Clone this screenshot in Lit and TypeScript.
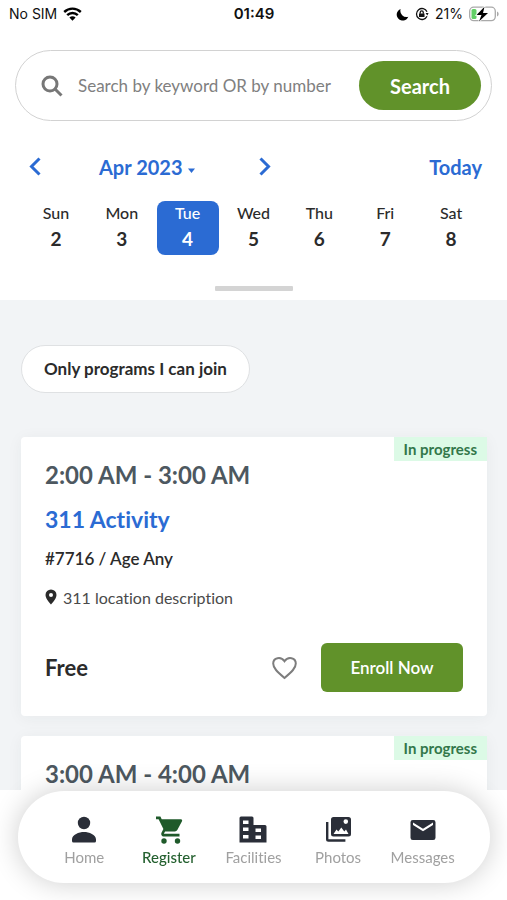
import { LitElement, html, css, svg, nothing } from "lit";
import { customElement, property, state } from "lit/decorators.js";
import { classMap } from "lit/directives/class-map.js";

const navItems = [
  {
    label: "Home",
    icon: svg`<circle cx="14" cy="7" r="6.2"/><path d="M2 26.500v-3C2 18.500 9 16 14 16S26 18.500 26 23.500v1.500a1.500 1.500 0 0 1-1.500 1.500h-21A1.500 1.500 0 0 1 2 25z"/>`,
  },
  {
    label: "Register",
    icon: svg`<path d="M1 .500h4.400l1.300 2.800h19.200c1 0 1.600 1 1.100 1.900l-4.700 8.800c-.5.900-1.400 1.400-2.400 1.400h-9.800l-1.300 2.400h15.700v2.700H8.900c-2.100 0-3.300-2.200-2.300-4l1.800-3.400L3.600 3.200H1z"/><circle cx="9" cy="25" r="2.700"/><circle cx="22.500" cy="25" r="2.700"/>`,
  },
  {
    label: "Facilities",
    icon: svg`<path fill-rule="evenodd" d="M2 .500h11A1.500 1.500 0 0 1 14.500 2v7H26a1.500 1.500 0 0 1 1.500 1.500v16H.5V2A1.500 1.500 0 0 1 2 .500zM4 4.500v3.500h5.500V4.500zM4 11.500V15h5.500v-3.500zM4 19v3.500h5.500V19zM16.500 12.500V16H22v-3.500zM16.500 19.500V23H22v-3.500z"/>`,
  },
  {
    label: "Photos",
    icon: svg`<path fill-rule="evenodd" d="M9.500 1h15A2.500 2.500 0 0 1 27 3.500v14.500a2.500 2.500 0 0 1-2.500 2.500h-15A2.500 2.500 0 0 1 7 18V3.500A2.500 2.500 0 0 1 9.500 1zM9.500 18h15l-2.500-4.500-1.700 2-3-4-3 4-1.800-2zM21.800 3.300a2.300 2.300 0 1 0 0 4.600 2.300 2.300 0 0 0 0-4.600z"/><path d="M2 6h2.400v17.300h17v2.500H4.500A2.500 2.500 0 0 1 2 23.300z"/>`,
  },
  {
    label: "Messages",
    icon: svg`<path fill-rule="evenodd" d="M3.800 4h20.400A2.300 2.300 0 0 1 26.500 6.300v15.400a2.300 2.300 0 0 1-2.300 2.300H3.800a2.300 2.300 0 0 1-2.300-2.300V6.300A2.300 2.300 0 0 1 3.800 4zM4 6.500v2.400l10 6.400 10-6.400V6.500l-10 6.300z"/>`,
  },
];

const days = [
  ["Sun", 2],
  ["Mon", 3],
  ["Tue", 4],
  ["Wed", 5],
  ["Thu", 6],
  ["Fri", 7],
  ["Sat", 8],
] as const;

const reset = css`
  * {
    box-sizing: border-box;
  }
  button {
    font: inherit;
    color: inherit;
    background: none;
    border: 0;
    padding: 0;
    margin: 0;
    cursor: pointer;
  }
  svg {
    display: block;
    flex: none;
  }
`;

@customElement("status-bar")
class StatusBar extends LitElement {
  static styles = [
    reset,
    css`
      :host {
        display: grid;
        grid-template-columns: 1fr auto 1fr;
        align-items: center;
        height: 28px;
        padding: 0 8px 0 9px;
        font: 14px/20px Inter, "Liberation Sans", sans-serif;
        color: #111;
      }
      .group {
        display: flex;
        align-items: center;
        gap: 6px;
      }
      .end {
        justify-content: flex-end;
      }
      .time {
        font-size: 15px;
        font-weight: 600;
      }
    `,
  ];

  render() {
    return html`
      <div class="group">
        <span>No SIM</span>
        <svg width="19" height="14" viewBox="0 0 19 14" fill="none" stroke="#000" stroke-width="2.400">
          <path d="M1.200 5C6 .500 13 .500 17.800 5M4.200 8.200c3-2.900 7.600-2.900 10.600 0" />
          <path d="M6.400 10.500c1.800-1.600 4.400-1.600 6.200 0L9.500 13.700z" fill="#000" stroke="none" />
        </svg>
      </div>
      <div class="time">01:49</div>
      <div class="group end">
        <svg width="13" height="13" viewBox="0 0 13 13">
          <path d="M4.600 1A6 6 0 1 0 12.300 8.800 6.300 6.300 0 0 1 4.600 1z" />
        </svg>
        <svg width="14" height="14" viewBox="0 0 14 14" fill="none" stroke="#111" stroke-width="1.300">
          <path d="M12 9.300A5.500 5.500 0 1 1 12 4.700" />
          <path d="M10.600 6h3l-1.300 2.600zM4 6.500h5.500v3.400H4z" fill="#111" stroke="none" />
          <path d="M5.200 6.700V5.400a1.500 1.500 0 0 1 3.100 0v1.300" />
        </svg>
        <span>21%</span>
        <svg width="30" height="16" viewBox="0 0 30 16">
          <rect x=".700" y="1.200" width="25.600" height="13.400" rx="4" fill="#fff" stroke="#a9a9a9" stroke-width="1.300" />
          <path d="M28 5.500c2.200 1 2.200 4 0 5z" fill="#a9a9a9" />
          <rect x="2.500" y="3" width="5" height="10" rx="1.500" fill="#62cf66" />
          <path d="M15.500 .800 7.500 9h5l-2.500 6.500L19 7h-5z" stroke="#fff" stroke-width="1.500" paint-order="stroke" />
        </svg>
      </div>
    `;
  }
}

@customElement("program-card")
class ProgramCard extends LitElement {
  @property() time = "";
  @property() name = "";
  @property() details = "";
  @property() place = "";
  @property() price = "";

  static styles = [
    reset,
    css`
      :host {
        display: block;
        position: relative;
        padding: 24px;
        background: #fff;
        border-radius: 4px;
        box-shadow: 0 2px 16px rgba(30, 50, 50, 0.05);
      }
      .badge {
        position: absolute;
        top: 0;
        right: 0;
        padding: 0 10px;
        font-size: 15px;
        font-weight: 700;
        line-height: 24px;
        color: #33774a;
        background: #dcfae6;
      }
      .time,
      .name {
        margin: 0;
        font-size: 24px;
        font-weight: 700;
        line-height: 28px;
      }
      .time {
        color: #4d5860;
      }
      .name {
        margin-top: 16px;
        font-size: 23px;
      }
      .name a {
        color: #2b6bd3;
        text-decoration: none;
      }
      .details,
      .place {
        font-size: 16px;
        line-height: 24px;
      }
      .details {
        margin-top: 14px;
        font-size: 17px;
        font-weight: 600;
      }
      .place {
        display: flex;
        align-items: center;
        gap: 6px;
        margin-top: 15px;
        color: #4a4a4a;
      }
      .foot {
        display: flex;
        align-items: center;
        margin-top: 33px;
      }
      .price {
        flex: 1;
        font-size: 22px;
        font-weight: 700;
      }
      .enroll {
        width: 142px;
        height: 49px;
        margin-left: 24px;
        border-radius: 6px;
        background: #61922a;
        color: #fff;
        font-size: 17px;
        font-weight: 600;
      }
    `,
  ];

  render() {
    return html`
      <div class="badge">In progress</div>
      <div class="time">${this.time}</div>
      ${this.name ? this.renderBody() : nothing}
    `;
  }

  private renderBody() {
    return html`
      <h2 class="name"><a href="#">${this.name}</a></h2>
      <div class="details">${this.details}</div>
      <div class="place">
        <svg width="12" height="18" viewBox="0 0 12 18" fill="#2a2a2a">
          <path fill-rule="evenodd" d="M6 .500A5.500 5.500 0 0 0 .5 6C.5 10 6 15.500 6 15.500S11.500 10 11.500 6A5.500 5.500 0 0 0 6 .500zm0 3.500a2 2 0 1 1 0 4 2 2 0 0 1 0-4z" />
        </svg>
        <span>${this.place}</span>
      </div>
      <div class="foot">
        <div class="price">${this.price}</div>
        <button aria-label="Add to favourites">
          <svg width="25" height="24" viewBox="0 0 25 24" fill="none" stroke="#7d7d7d" stroke-width="2">
            <path d="M12.500 22C5 15.500 1.200 12 1.200 7.500 1.200 1.500 9 .2 12.500 5.200 16 .2 23.800 1.500 23.800 7.500c0 4.500-3.800 8-11.300 14.500z" />
          </svg>
        </button>
        <button class="enroll">Enroll Now</button>
      </div>
    `;
  }
}

@customElement("app-root")
class AppRoot extends LitElement {
  @state() selected = 4;

  static styles = [
    reset,
    css`
      :host {
        display: flex;
        flex-direction: column;
        height: 100vh;
        overflow: hidden;
        background: #fff;
        color: #2b2b2b;
        font-family: Lato, "Liberation Sans", sans-serif;
        font-variant-ligatures: none;
      }
      .search {
        display: flex;
        align-items: center;
        height: 71px;
        margin: 22px 15px 0 15px;
        padding: 0 10px 0 25px;
        border: 1px solid #d2d2d2;
        border-radius: 36px;
      }
      .search input {
        flex: 1;
        min-width: 0;
        margin-left: 15px;
        padding: 0;
        border: 0;
        outline: 0;
        background: none;
        font: 17px/24px Lato, "Liberation Sans", sans-serif;
        color: #2b2b2b;
      }
      .search input::placeholder {
        color: #808080;
        opacity: 1;
      }
      .go {
        width: 122px;
        height: 49px;
        border-radius: 25px;
        background: #61922a;
        color: #fff;
        font-size: 20px;
        font-weight: 700;
      }
      .months {
        display: flex;
        align-items: center;
        margin: 33px 25px 0 29px;
        color: #2b6bd3;
        font-size: 20px;
        font-weight: 700;
        line-height: 26px;
      }
      .month {
        display: flex;
        align-items: center;
        gap: 5px;
        margin: 0 64px 0 58px;
      }
      .today {
        margin-left: auto;
      }
      .week {
        display: grid;
        grid-template-columns: repeat(7, 1fr);
        gap: 4px;
        margin: 21px 25px 31px;
      }
      .day {
        display: flex;
        flex-direction: column;
        align-items: center;
        height: 54px;
        border-radius: 8px;
        font-size: 16px;
        line-height: 24px;
        font-weight: 500;
      }
      .date {
        font-size: 19px;
        line-height: 28px;
        font-weight: 700;
      }
      .day.on {
        background: #2b6bd3;
        color: #fff;
      }
      .handle {
        width: 78px;
        height: 5px;
        margin: 0 auto 9px;
        border-radius: 1px;
        background: #d4d4d4;
      }
      main {
        flex: 1;
        min-height: 0;
        overflow-y: auto;
        scrollbar-width: none;
        padding: 45px 20px 24px 21px;
        background: #f2f4f6;
      }
      .chip {
        height: 48px;
        margin-bottom: 44px;
        padding: 0 22px;
        border: 1px solid #dfe1e3;
        border-radius: 24px;
        background: #fff;
        font-size: 17px;
        line-height: 24px;
        font-weight: 700;
      }
      program-card + program-card {
        margin-top: 20px;
      }
      .bottom {
        position: relative;
        padding: 1px 17px 17px 18px;
      }
      .tabs {
        display: grid;
        grid-template-columns: repeat(5, 1fr);
        height: 92px;
        padding: 0 25px 0 24px;
        border-radius: 46px;
        background: #fff;
        box-shadow: 0 0 28px rgba(0, 0, 0, 0.2);
      }
      .tab {
        display: flex;
        flex-direction: column;
        align-items: center;
        gap: 3px;
        padding-top: 25px;
        font-size: 15px;
        line-height: 20px;
        color: #a0a0a0;
        text-decoration: none;
      }
      .tab svg {
        fill: #2a2e38;
      }
      .tab.on {
        color: #24602f;
        font-weight: 500;
      }
      .tab.on svg {
        fill: #1f5a2a;
      }
    `,
  ];

  render() {
    return html`
      <status-bar></status-bar>
      <form class="search" @submit=${(e: Event) => e.preventDefault()}>
        <svg width="22" height="22" viewBox="0 0 22 22" fill="none" stroke="#777" stroke-width="3">
          <circle cx="9" cy="9" r="7" />
          <path d="m14 14 6.500 6.500" />
        </svg>
        <input type="text" aria-label="Search" placeholder="Search by keyword OR by number" />
        <button class="go">Search</button>
      </form>
      <div class="months">
        <button aria-label="Previous week">
          <svg width="12" height="20" viewBox="0 0 12 20" fill="none" stroke="#2b6bd3" stroke-width="3">
            <path d="M10.500 1.500 2.500 9.500l8 8" />
          </svg>
        </button>
        <button class="month">
          Apr 2023
          <svg width="7" height="12" viewBox="0 0 7 12" fill="#2b6bd3"><path d="M0 7.500h7L3.500 12z" /></svg>
        </button>
        <button aria-label="Next week">
          <svg width="12" height="20" viewBox="0 0 12 20" fill="none" stroke="#2b6bd3" stroke-width="3">
            <path d="m1.500 1.500 8 8-8 8" />
          </svg>
        </button>
        <button class="today">Today</button>
      </div>
      <div class="week">
        ${days.map(
          ([name, date]) => html`
            <button class=${classMap({ day: true, on: date === this.selected })} @click=${() => (this.selected = date)}>
              <span>${name}</span><span class="date">${date}</span>
            </button>
          `
        )}
      </div>
      <div class="handle"></div>
      <main>
        <button class="chip">Only programs I can join</button>
        <program-card
          time="2:00 AM - 3:00 AM"
          name="311 Activity"
          details="#7716 / Age Any"
          place="311 location description"
          price="Free"
        ></program-card>
        <program-card time="3:00 AM - 4:00 AM"></program-card>
      </main>
      <div class="bottom">
        <nav class="tabs">
          ${navItems.map(
            (item) => html`
              <a href="#" class=${classMap({ tab: true, on: item.label === "Register" })}>
                <svg width="28" height="28" viewBox="0 0 28 28">${item.icon}</svg>
                ${item.label}
              </a>
            `
          )}
        </nav>
      </div>
    `;
  }
}
